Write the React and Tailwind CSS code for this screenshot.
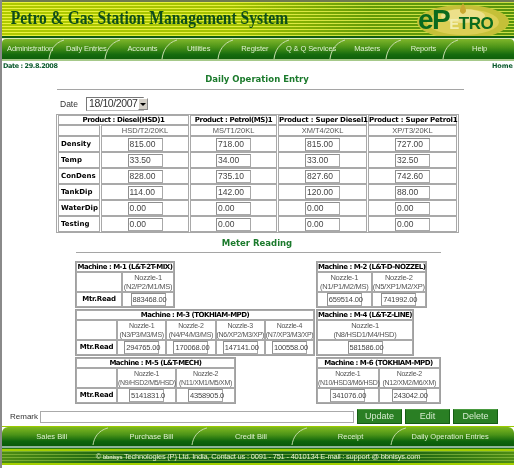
const nav = ["Administration","Daily Entries","Accounts","Utilities","Register","Q & Q Services","Masters","Reports","Help"];
const bottomNav = ["Sales Bill","Purchase Bill","Credit Bill","Receipt","Daily Operation Entries"];
const products = [
  ["Product : Diesel(HSD)1","HSD/T2/20KL"],
  ["Product : Petrol(MS)1","MS/T1/20KL"],
  ["Product : Super Diesel1","XM/T4/20KL"],
  ["Product : Super Petrol1","XP/T3/20KL"],
];
const rows = [
  ["Density","815.00","718.00","815.00","727.00"],
  ["Temp","33.50","34.00","33.00","32.50"],
  ["ConDens","828.00","735.10","827.60","742.60"],
  ["TankDip","114.00","142.00","120.00","88.00"],
  ["WaterDip","0.00","0.00","0.00","0.00"],
  ["Testing","0.00","0.00","0.00","0.00"],
];
const sans = "font-['Liberation_Sans',Arial,sans-serif]";
const bold = "font-['DejaVu_Sans',Verdana,sans-serif] font-bold";
const cell = "border border-[#a9a9a9] p-0";

function Curve({ h = 20 }) {
  return (
    <svg width="18" height={h} viewBox="0 0 18 20" className="shrink-0" preserveAspectRatio="none">
      <path d="M1 20 C2 12 6 4 16 1" fill="none" stroke="#c9dfae" strokeWidth="1" />
    </svg>
  );
}

function Box({ v, small }) {
  return (
    <div className={`w-[35px] h-[13px] mx-auto border border-[#a8a8a8] border-t-[#8f8f8f] border-l-[#8f8f8f] bg-white leading-[11px] pl-px text-left text-[#444] whitespace-nowrap ${small ? "text-[7.5px] tracking-[-0.15px]" : "text-[8.5px]"}`}>{v}</div>
  );
}

function Machine({ title, nozzles, width, labelW, tight }) {
  return (
    <table className={`${width} table-fixed border-separate border-spacing-0 border border-[#a0a0a0] text-center text-[#555] ${sans} ${tight ? "text-[7px] tracking-[-0.3px]" : "text-[7.5px] tracking-[-0.25px]"}`}>
      <colgroup>
        {labelW && <col className={labelW} />}
        {nozzles.map((n) => <col key={n[0]} />)}
      </colgroup>
      <tbody>
        <tr>
          <td colSpan={nozzles.length + (labelW ? 1 : 0)} className={`${cell} h-[10px] text-[7px] tracking-[-0.5px] leading-[8px] text-black whitespace-nowrap ${bold}`}>{title}</td>
        </tr>
        <tr>
          {labelW && <td className={cell}></td>}
          {nozzles.map((n) => (
            <td key={n[0]} className={`${cell} h-[20px] leading-[9px] whitespace-nowrap`}>
              Nozzle-{n[0]}<br />({n[1]})
            </td>
          ))}
        </tr>
        <tr>
          {labelW && <td className={`${cell} h-[15px] text-[7px] tracking-[-0.2px] text-black ${bold}`}>Mtr.Read</td>}
          {nozzles.map((n) => (
            <td key={n[0]} className={`${cell} h-[15px]`}><Box v={n[2]} small /></td>
          ))}
        </tr>
      </tbody>
    </table>
  );
}

export default function App() {
  return (
    <div className={`w-[514px] h-[468px] overflow-hidden bg-white border-l-2 border-[#8a8a8a] flex flex-col blur-[0.3px] ${sans}`}>
      <div className="h-[2px] shrink-0 bg-[#6e7a50]" />
      {/* header */}
      <div className="h-[34px] shrink-0 flex items-center justify-between bg-[repeating-linear-gradient(180deg,rgba(255,255,90,0.7)_0,rgba(255,255,90,0.7)_1px,rgba(120,160,0,0.2)_1px,rgba(120,160,0,0.2)_3px),linear-gradient(90deg,#bdd400_0%,#aecb00_45%,#5d9a08_72%,#4f9010_100%)]">
        <div className="pl-[11px] pb-[3px] font-['Liberation_Serif',serif] font-bold text-[19.5px] leading-none text-[#0f4d1c] whitespace-nowrap scale-x-[0.8] origin-left">
          Petro &amp; Gas Station Management System
        </div>
        <div className="relative w-[96px] h-[34px] mr-[5px] shrink-0 overflow-hidden">
          <svg width="96" height="34" viewBox="0 0 96 34" className="absolute inset-0">
            <ellipse cx="50" cy="20" rx="46" ry="17" fill="#c5c038" />
            <ellipse cx="50" cy="20" rx="36" ry="13" fill="#dccf55" />
            <ellipse cx="50" cy="14" rx="22" ry="7" fill="#ece08a" />
            <path d="M50 1 C47 7 45 10 50 12 C55 10 53 7 50 1 Z" fill="#c9a830" />
          </svg>
          <div className="absolute left-[5px] top-[6px] flex items-baseline font-['Liberation_Sans',sans-serif] font-black leading-[24px] text-[#0b6a1e] whitespace-nowrap">
            <span className="text-[28px] tracking-[-1.5px]">eP</span>
            <span className="text-[15px] text-[#f1eeb0] tracking-[-0.5px]">E</span>
            <span className="text-[17px] tracking-[-0.5px]">TRO</span>
          </div>
        </div>
      </div>
      <div className="h-[2px] shrink-0 bg-[#0f5d12]" />
      <div className="h-px shrink-0 bg-[#d7e6b8]" />
      {/* nav */}
      <div className="h-[20px] shrink-0 rounded-t-[4px] flex bg-[linear-gradient(180deg,#7fb62a_0%,#4c9418_40%,#156b0e_78%,#0f5f0a_100%)]">
        {nav.map((n, i) => (
          <div key={n} className="flex w-[56.2px] relative items-center justify-center text-[7.5px] tracking-[-0.1px] text-[#dff0cf] whitespace-nowrap">
            {n}
            {i < nav.length - 1 && (
              <div className="absolute right-[-8px] top-0"><Curve /></div>
            )}
          </div>
        ))}
      </div>
      <div className="h-[2px] shrink-0 bg-[#a6c98a]" />
      {/* date */}
      <div className={`h-[9px] shrink-0 mt-px flex justify-between px-px text-[6.5px] leading-[9px] text-[#0b5a2e] ${bold}`}>
        <span className="tracking-[-0.4px]">Date : 29.8.2008</span><span>Home</span>
      </div>
      <div className={`mt-[2px] text-center text-[8.5px] leading-[12px] text-[#1b7a2c] pr-[2px] ${bold}`}>Daily Operation Entry</div>
      <div className="h-px ml-[55px] mr-[50px] mt-[4px] bg-[#a5a5a5]" />
      {/* date select */}
      <div className="flex items-center ml-[58px] mt-[7px] h-[14px] shrink-0">
        <span className="text-[8.5px] text-[#333] w-[26px]">Date</span>
        <div className="w-[58px] h-[14px] border border-[#777] border-r-[#bbb] border-b-[#bbb] flex items-center justify-between text-[10.5px] tracking-[-0.4px] text-[#333] pl-[2px] whitespace-nowrap">
          18/10/2007
          <span className="w-[10px] h-[12px] shrink-0 bg-[#d4d0c8] border border-[#888] border-t-white border-l-white flex items-center justify-center">
            <span className="border-x-[3px] border-x-transparent border-t-[3px] border-t-black" />
          </span>
        </div>
      </div>
      {/* product table */}
      <table className={`w-[403px] ml-[54px] mt-[3px] shrink-0 table-fixed border-separate border-spacing-x-[1px] border-spacing-y-0 border border-[#a8a8a8] text-center ${sans}`}>
        <colgroup>
          <col className="w-[42px]" /><col className="w-[88px]" /><col className="w-[87px]" /><col className="w-[89px]" /><col className="w-[89px]" />
        </colgroup>
        <tbody>
          <tr>
            <td colSpan={2} className={`${cell} h-[10px] text-[7px] tracking-[-0.4px] leading-[8px] text-black whitespace-nowrap ${bold}`}>{products[0][0]}</td>
            {products.slice(1).map((p, i) => (
              <td key={p[0]} className={`${cell} text-[7px] leading-[8px] text-black whitespace-nowrap ${i === 0 ? "tracking-[-0.4px]" : "tracking-[-0.2px]"} ${bold}`}>{p[0]}</td>
            ))}
          </tr>
          <tr>
            <td className={cell}></td>
            {products.map((p) => (
              <td key={p[1]} className={`${cell} h-[11px] text-[7.5px] leading-[9px] text-[#555]`}>{p[1]}</td>
            ))}
          </tr>
          {rows.map((r) => (
            <tr key={r[0]}>
              <td className={`${cell} h-[16px] text-left pl-[2px] text-[7px] text-black ${bold}`}>{r[0]}</td>
              {r.slice(1).map((v, i) => (
                <td key={i} className={cell}><Box v={v} /></td>
              ))}
            </tr>
          ))}
        </tbody>
      </table>
      <div className={`mt-[4px] text-center text-[8.5px] leading-[12px] text-[#1b7a2c] pr-[2px] shrink-0 ${bold}`}>Meter Reading</div>
      <div className="h-px ml-[74px] mr-[73px] mt-[3px] shrink-0 bg-[#a5a5a5]" />
      {/* machines */}
      <div className="ml-[73px] mt-[8px] flex flex-col gap-px shrink-0">
        <div className="flex gap-px">
          <div className="w-[240px]">
            <Machine width="w-[100px]" labelW="w-[46px]" title="Machine : M-1 (L&T-2T-MIX)" nozzles={[["1","N2/P2/M1/MS","883468.00"]]} />
          </div>
          <Machine width="w-[111px]" title="Machine : M-2 (L&T-D-NOZZEL)" nozzles={[["1","N1/P1/M2/MS","659514.00"],["2","N5/XP1/M2/XP","741992.00"]]} />
        </div>
        <div className="flex gap-px">
          <Machine width="w-[240px]" labelW="w-[41px]" tight title="Machine : M-3 (TOKHIAM-MPD)" nozzles={[["1","N3/P3/M3/MS","294765.00"],["2","N4/P4/M3/MS","170068.00"],["3","N6/XP2/M3/XP","147141.00"],["4","N7/XP3/M3/XP","100558.00"]]} />
          <Machine width="w-[98px]" title="Machine : M-4 (L&T-Z-LINE)" nozzles={[["1","N8/HSD1/M4/HSD","581586.00"]]} />
        </div>
        <div className="flex gap-px">
          <div className="w-[240px]">
            <Machine width="w-[161px]" labelW="w-[41px]" tight title="Machine : M-5 (L&T-MECH)" nozzles={[["1","N9/HSD2/M5/HSD","5141831.0"],["2","N11/XM1/M5/XM","4358905.0"]]} />
          </div>
          <Machine width="w-[125px]" tight title="Machine : M-6 (TOKHIAM-MPD)" nozzles={[["1","N10/HSD3/M6/HSD","341076.00"],["2","N12/XM2/M6/XM","243042.00"]]} />
        </div>
      </div>
      {/* remark */}
      <div className="flex items-center mt-[5px] h-[15px] shrink-0">
        <span className="w-[38px] pl-[8px] text-[8px] text-[#333]">Remark</span>
        <div className="w-[314px] h-[12px] border border-[#aaa] bg-white" />
        <div className="flex gap-[3px] ml-[3px]">
          {["Update","Edit","Delete"].map((b) => (
            <div key={b} className="w-[45px] h-[15px] flex items-center justify-center bg-[#2a7f24] border border-[#155d14] border-t-[#4a9a40] text-[9px] text-[#d5ebcf]">{b}</div>
          ))}
        </div>
      </div>
      {/* bottom nav */}
      <div className="h-px mt-[2px] shrink-0 bg-[#9bcb00]" />
      <div className="h-[19px] shrink-0 rounded-t-[6px] flex bg-[linear-gradient(180deg,#7fb820_0%,#4c9418_40%,#0f660c_75%,#0a5a08_100%)]">
        {bottomNav.map((n, i) => (
          <div key={n} className="relative w-[99.6px] flex items-center justify-center text-[7.5px] text-[#dff0cf] whitespace-nowrap">
            {n}
            {i < bottomNav.length - 1 && (
              <div className="absolute right-[-8px] top-0"><Curve h={18} /></div>
            )}
          </div>
        ))}
      </div>
      <div className="h-[2px] shrink-0 bg-[#8fb59a]" />
      <div className="h-px shrink-0 bg-[#2b7a10]" />
      <div className="h-[2px] shrink-0 bg-[#a4cf00]" />
      <div className="h-[12px] shrink-0 flex items-center justify-center text-[7.5px] tracking-[-0.2px] text-[#e6f0d0] whitespace-nowrap bg-[repeating-linear-gradient(180deg,rgba(180,220,90,0.45)_0,rgba(180,220,90,0.45)_1px,rgba(0,0,0,0)_1px,rgba(0,0,0,0)_3px),linear-gradient(90deg,#4d8c14,#135f12_25%,#135f12_75%,#4d8c14)]">
        <span>© <span className="font-bold text-[5.5px]">bbnisys</span> Technologies (P) Ltd. India, Contact us : 0091 - 751 - 4010134 E-mail : support @ bbnisys.com</span>
      </div>
      <div className="h-[2px] shrink-0 bg-[#a4cf00]" />
    </div>
  );
}
